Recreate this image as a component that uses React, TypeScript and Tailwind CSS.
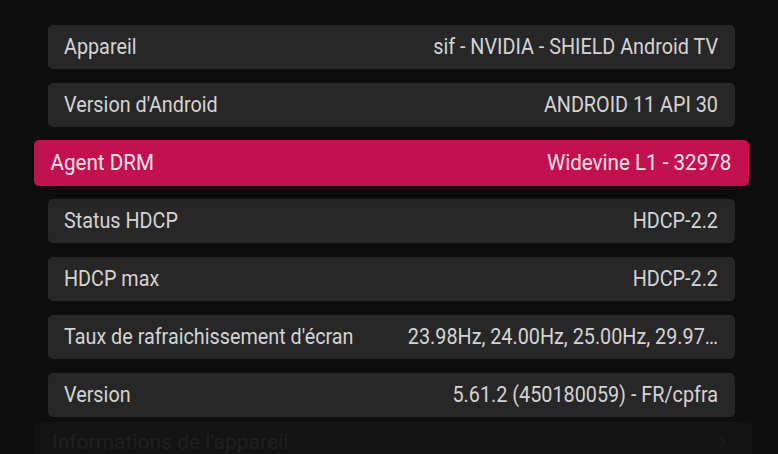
import { ChevronRight } from 'lucide-react'

interface InfoRowProps {
  label: string
  value: string
  focused?: boolean
}

const rows: InfoRowProps[] = [
  { label: 'Appareil', value: 'sif - NVIDIA - SHIELD Android TV' },
  { label: "Version d'Android", value: 'ANDROID 11 API 30' },
  { label: 'Agent DRM', value: 'Widevine L1 - 32978', focused: true },
  { label: 'Status HDCP', value: 'HDCP-2.2' },
  { label: 'HDCP max', value: 'HDCP-2.2' },
  { label: "Taux de rafraichissement d'écran", value: '23.98Hz, 24.00Hz, 25.00Hz, 29.97…' },
  { label: 'Version', value: '5.61.2 (450180059) - FR/cpfra' },
]

function InfoRow({ label, value, focused }: InfoRowProps) {
  const styleProps = focused
    ? 'bg-[#c3104f] text-[#f8e0ea] scale-x-[1.041] scale-y-[1.045] shadow-lg'
    : 'bg-[#272727] text-[#d4d4d4]'

  return (
    <div
      className={`flex items-center justify-between h-[44px] w-[687px] rounded-[5px] pl-[16px] pr-[17px] ${styleProps}`}
    >
      <span className="inline-block whitespace-nowrap scale-y-[1.1]">{label}</span>
      <span className="inline-block whitespace-nowrap scale-y-[1.1] origin-right">{value}</span>
    </div>
  )
}

export default function App() {
  return (
    <div
      className="relative w-[778px] h-[454px] overflow-hidden bg-[#0e0e0e] text-[19.8px] leading-none"
      style={{ fontFamily: 'Roboto, "Noto Sans", sans-serif' }}
    >
      <div className="flex flex-col gap-[14px] pt-[25px] pl-[48px]">
        {rows.map((row) => (
          <InfoRow key={row.label} {...row} />
        ))}
      </div>
      <div className="mt-[5px] ml-[35px] w-[717px] h-[40px] rounded-t-[5px] bg-[#131313] flex items-center justify-between pl-[17px] pr-[20px] text-[#202020]">
        <span className="text-[21px]">Informations de l'appareil</span>
        <ChevronRight size={20} strokeWidth={2} className="text-[#1c1c1c]" />
      </div>
    </div>
  )
}
